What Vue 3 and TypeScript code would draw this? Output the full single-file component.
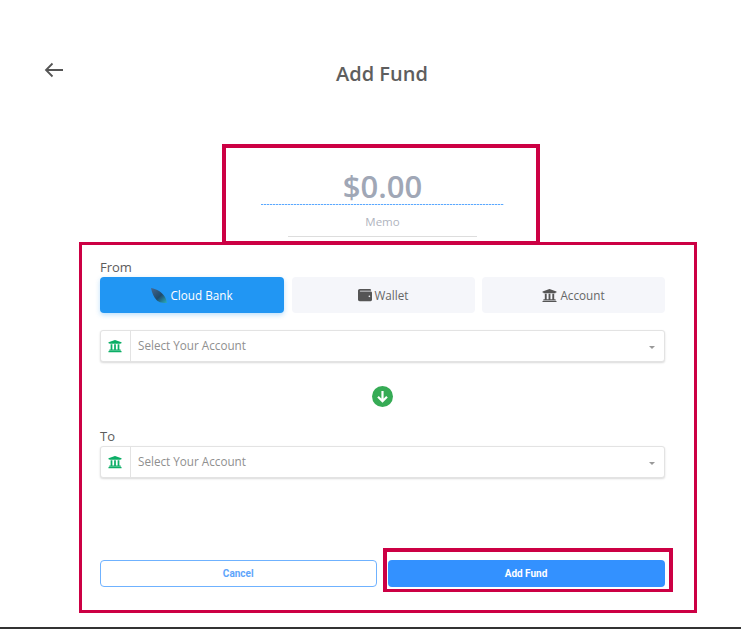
<script setup lang="ts">
const bankPath =
  'M496 128v16a8 8 0 0 1-8 8h-24v12c0 6.627-5.373 12-12 12H60c-6.627 0-12-5.373-12-12v-12H24a8 8 0 0 1-8-8v-16a8 8 0 0 1 4.941-7.392l232-88a7.996 7.996 0 0 1 6.118 0l232 88A8 8 0 0 1 496 128zm-24 304H40c-13.255 0-24 10.745-24 24v16a8 8 0 0 0 8 8h464a8 8 0 0 0 8-8v-16c0-13.255-10.745-24-24-24zM96 192v192H60c-6.627 0-12 5.373-12 12v20h416v-20c0-6.627-5.373-12-12-12h-36V192h-64v192h-64V192h-64v192h-64V192H96z';
const walletPath =
  'M461.2 128H80c-8.84 0-16-7.16-16-16s7.16-16 16-16h384c8.84 0 16-7.16 16-16 0-26.51-21.49-48-48-48H64C28.65 32 0 60.65 0 96v320c0 35.35 28.65 64 64 64h397.2c28.02 0 50.8-21.53 50.8-48V176c0-26.47-22.78-48-50.8-48zM416 336c-17.67 0-32-14.33-32-32s14.33-32 32-32 32 14.33 32 32-14.33 32-32 32z';
</script>

<template>
  <div class="page">
    <header class="header">
      <svg class="back" width="20" height="16" viewBox="0 0 20 16" fill="none">
        <path d="M19 8H2M8.5 1.5 2 8l6.5 6.5" stroke="#555" stroke-width="1.8" />
      </svg>
      <h1 class="title">Add Fund</h1>
    </header>

    <section class="amount-box">
      <div class="amount">$0.00</div>
      <div class="memo">Memo</div>
    </section>

    <section class="form-box">
      <div class="label">From</div>
      <div class="tabs">
        <button class="tab active">
          <svg width="16" height="15" viewBox="0 0 16 15">
            <defs>
              <linearGradient id="leaf" x1="0" y1="0" x2="1" y2="1">
                <stop offset="0" stop-color="#46688f" />
                <stop offset="0.55" stop-color="#1f4a6b" />
                <stop offset="1" stop-color="#2bb0bd" />
              </linearGradient>
            </defs>
            <path d="M0 0c6 1 11 4 14 9 .8 1.600 1.400 3.400 2 6-4 0-8-.3-10.500-3C3 9.500 1 5 0 0z" fill="url(#leaf)" />
          </svg>
          Cloud Bank
        </button>
        <button class="tab">
          <svg width="14" height="14" viewBox="0 0 512 512"><path :d="walletPath" fill="#555" /></svg>
          Wallet
        </button>
        <button class="tab">
          <svg width="15" height="15" viewBox="0 0 512 512"><path :d="bankPath" fill="#555" /></svg>
          Account
        </button>
      </div>

      <div class="select first">
        <span class="select-icon">
          <svg width="14" height="14" viewBox="0 0 512 512"><path :d="bankPath" fill="#0bae66" /></svg>
        </span>
        <span class="select-text">Select Your Account</span>
        <span class="caret"></span>
      </div>

      <div class="swap">
        <svg width="21" height="21" viewBox="0 0 21 21">
          <circle cx="10.500" cy="10.500" r="10.500" fill="#36ab55" />
          <path d="M10.500 5v10M6 10.800l4.500 4.500 4.500-4.500" fill="none" stroke="#fff" stroke-width="2.200" />
        </svg>
      </div>

      <div class="label">To</div>
      <div class="select second">
        <span class="select-icon">
          <svg width="14" height="14" viewBox="0 0 512 512"><path :d="bankPath" fill="#0bae66" /></svg>
        </span>
        <span class="select-text">Select Your Account</span>
        <span class="caret"></span>
      </div>

      <div class="actions">
        <button class="btn cancel">Cancel</button>
        <div class="submit-wrap">
          <button class="btn submit">Add Fund</button>
        </div>
      </div>
    </section>
  </div>
</template>

<style scoped>
.page {
  box-sizing: border-box;
  width: 741px;
  height: 629px;
  background: #fff;
  border-bottom: 2px solid #333;
  font-family: "Open Sans", sans-serif;
  color: #555;
  overflow: hidden;
}

.header {
  box-sizing: border-box;
  height: 144px;
  display: flex;
  align-items: flex-start;
  padding: 62px 0 0 44px;
}

.back {
  display: block;
}

.title {
  margin: 0 0 0 272px;
  font-size: 20px;
  line-height: 24px;
  font-weight: 600;
  color: #5e5e5e;
}

.amount-box {
  box-sizing: border-box;
  width: 318px;
  height: 100px;
  margin-left: 222px;
  padding-left: 3px;
  border: 4px solid #cc0044;
  border-bottom-width: 3px;
  display: flex;
  flex-direction: column;
  align-items: center;
}

.amount {
  box-sizing: border-box;
  width: 243px;
  height: 57px;
  padding-top: 18px;
  text-align: center;
  font-size: 31px;
  line-height: 40px;
  font-weight: 600;
  color: #a0a7b6;
  background: repeating-linear-gradient(90deg, #5aa9ff 0 2px, #cfe4ff 2px 3px) left bottom / 100% 1px no-repeat;
}

.memo {
  box-sizing: border-box;
  width: 189px;
  height: 32px;
  padding-top: 9px;
  text-align: center;
  font-size: 11.500px;
  line-height: 16px;
  color: #b0b4be;
  border-bottom: 1px solid #ddd;
}

.form-box {
  box-sizing: border-box;
  width: 618px;
  height: 371px;
  margin: -2px 0 0 79px;
  padding: 14px 29px 0 18px;
  border: 3px solid #cc0044;
}

.label {
  font-size: 13px;
  line-height: 16px;
  font-weight: 500;
  color: #5c5c5c;
}

.tabs {
  display: grid;
  grid-template-columns: 184px 183px 183px;
  justify-content: space-between;
  margin-top: 2px;
}

.tab {
  height: 36px;
  border: 0;
  border-radius: 4px;
  background: #f5f6fa;
  color: #666;
  font-family: inherit;
  font-size: 11.700px;
  display: flex;
  align-items: center;
  justify-content: center;
  gap: 3px;
  padding: 0;
}

.tab.active {
  background: #2196f3;
  color: #fff;
  box-shadow: 0 2px 5px rgba(33, 150, 243, 0.3);
}

.select {
  box-sizing: border-box;
  height: 32px;
  display: flex;
  align-items: center;
  border: 1px solid #e3e3e3;
  border-radius: 3px;
  box-shadow: 0 1px 2px rgba(0, 0, 0, 0.15);
  background: #fff;
}

.select.first {
  margin-top: 17px;
}

.select.second {
  margin-top: 2px;
}

.select-icon {
  box-sizing: border-box;
  width: 30px;
  height: 100%;
  padding-right: 2px;
  display: flex;
  align-items: center;
  justify-content: center;
  border-right: 1px solid #e3e3e3;
}

.select-text {
  flex: 1;
  padding: 0 0 2px 7px;
  font-size: 11.700px;
  color: #8f8f8f;
}

.caret {
  width: 0;
  height: 0;
  margin: 3px 9px 0 0;
  border-left: 3px solid transparent;
  border-right: 3px solid transparent;
  border-top: 3px solid #999;
}

.swap {
  box-sizing: border-box;
  height: 66px;
  padding-top: 2px;
  display: flex;
  align-items: center;
  justify-content: center;
}

.swap svg {
  display: block;
}

.actions {
  display: flex;
  align-items: flex-start;
  margin-top: 70px;
  margin-right: -8px;
}

.btn {
  box-sizing: border-box;
  width: 277px;
  height: 27px;
  border-radius: 4px;
  font-family: Roboto, sans-serif;
  font-size: 10px;
  font-weight: 700;
  padding: 0 0 1px;
}

.cancel {
  margin-top: 12px;
  background: #fff;
  border: 1px solid #6fb2ff;
  color: #5ea5fb;
}

.submit-wrap {
  box-sizing: border-box;
  width: 291px;
  height: 44px;
  margin-left: 6px;
  padding: 8px 0 0 1px;
  border: 4px solid #cc0044;
  border-bottom-width: 3px;
}

.submit {
  display: block;
  border: 0;
  background: #3391ff;
  color: #fff;
}
</style>

<style>
html,
body {
  margin: 0;
  background: #fff;
}
</style>
